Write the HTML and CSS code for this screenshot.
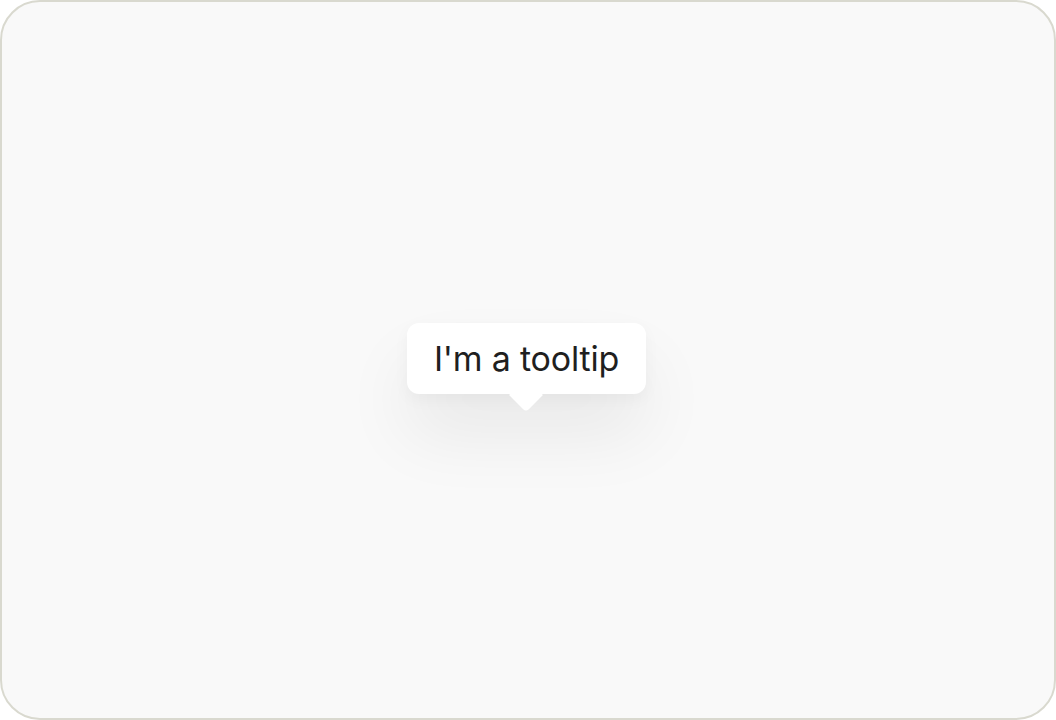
FILE: index.html
```html
<!DOCTYPE html>
<html>
<head>
<meta charset="utf-8">
<link rel="stylesheet" href="styles.css">
</head>
<body>
<div class="frame">
  <div class="tooltip">I'm a tooltip</div>
</div>
</body>
</html>
```
FILE: styles.css
```css
html, body {
  margin: 0;
  padding: 0;
  width: 1056px;
  height: 720px;
  background: #ffffff;
}
.frame {
  box-sizing: border-box;
  width: 1056px;
  height: 720px;
  border: 2px solid #d9d9cf;
  border-radius: 40px;
  background: #f9f9f9;
  display: flex;
  align-items: center;
  justify-content: center;
}
.tooltip {
  position: relative;
  box-sizing: border-box;
  width: 239px;
  height: 71px;
  margin-top: -4px;
  margin-right: 3px;
  background: #ffffff;
  border-radius: 12px;
  display: flex;
  align-items: center;
  justify-content: center;
  font-family: "Inter", "Noto Sans", sans-serif;
  font-size: 34px;
  font-weight: 400;
  letter-spacing: -0.2px;
  color: #1f1f1f;
  box-shadow: 0 40px 70px rgba(0, 0, 0, 0.07), 0 6px 16px rgba(0, 0, 0, 0.04);
}
.tooltip::after {
  content: "";
  position: absolute;
  left: 50%;
  bottom: -13px;
  width: 24px;
  height: 24px;
  margin-left: -13px;
  background: #ffffff;
  border-bottom-right-radius: 4px;
  transform: rotate(45deg);
}
```
